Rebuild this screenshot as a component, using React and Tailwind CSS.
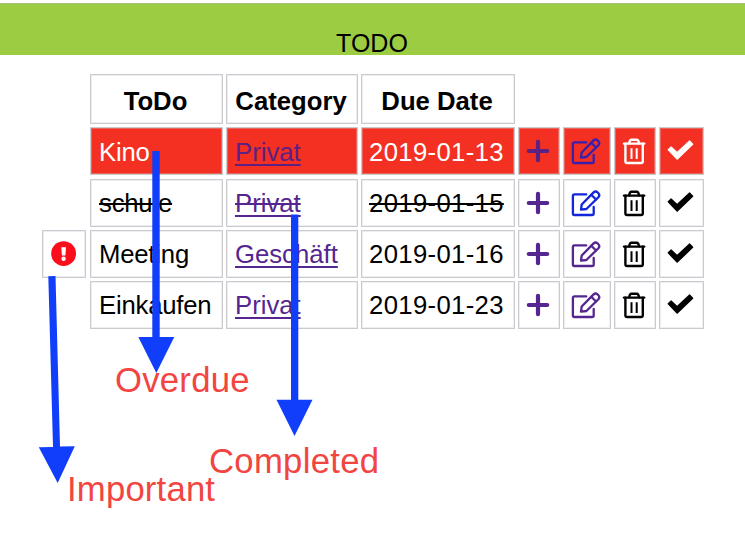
import React from "react";

function PlusIcon({ className }) {
  return (
    <svg viewBox="0 0 24 24" className={"h-6 w-6 " + className} fill="none" stroke="currentColor" strokeWidth="4.2" strokeLinecap="round">
      <path d="M12 2.8v18.4M2.8 12h18.4" />
    </svg>
  );
}

function EditIcon({ className }) {
  return (
    <svg viewBox="0 0 30 27" className={"h-[27px] w-[30px] shrink-0 " + className} fill="none" stroke="currentColor" strokeWidth="2.3" strokeLinejoin="round" strokeLinecap="round">
      <path d="M15.2 4.4H3.4Q1.9 4.4 1.9 5.9V23.5Q1.9 25 3.4 25H21Q22.7 25 22.7 23.5V17" />
      <path d="M10 19.7L10.7 14.5L22.6 2.4Q24.6 0.6 26.7 2.5L27.4 3.2Q29.2 5.2 27.4 7.2L15.4 19Z" />
      <path d="M20.3 4.8L25 9.5" />
    </svg>
  );
}

function TrashIcon() {
  return (
    <svg viewBox="0 0 24 27" className="h-[27px] w-6 shrink-0" fill="none" stroke="currentColor" strokeWidth="2.4" strokeLinejoin="round" strokeLinecap="round">
      <path d="M2 5.6H22.2" />
      <path d="M7.2 5.4Q7.6 1.8 9.4 1.8H14.8Q16.6 1.8 17 5.4" />
      <path d="M3.4 5.6V23.2Q3.4 25 5.1 25H19.1Q20.8 25 20.8 23.2V5.6" />
      <path d="M9.5 10.2V21M14.7 10.2V21" strokeWidth="2" strokeLinecap="butt" />
    </svg>
  );
}

function CheckIcon() {
  return (
    <svg viewBox="0 0 27 20" className="h-5 w-[27px] shrink-0 -translate-y-px" fill="currentColor" stroke="currentColor" strokeWidth="1.6" strokeLinejoin="round">
      <path d="M1.4 9.8L4 7.2L10.1 12.9L22.7 1.2L25.5 4.2L10.2 19Z" />
    </svg>
  );
}

function AlertIcon() {
  return (
    <svg viewBox="0 0 26 26" className="h-[26px] w-[26px] shrink-0">
      <circle cx="12.6" cy="12.6" r="12.4" fill="#fc0d1b" />
      <path d="M10.3 6.2H15L14.4 14.6H10.9Z" fill="#fff" />
      <circle cx="12.6" cy="17.8" r="2.2" fill="#fff" />
    </svg>
  );
}

const rows = [
  { title: "Kino", category: "Privat", due: "2019-01-13", overdue: true, edit: "text-[#3a1fae]" },
  { title: "schule", category: "Privat", due: "2019-01-15", done: true, edit: "text-[#1226d9]" },
  { title: "Meeting", category: "Geschäft", due: "2019-01-16", important: true, edit: "text-[#55268f]" },
  { title: "Einkaufen", category: "Privat", due: "2019-01-23", edit: "text-[#55268f]" },
];

const edge = "border border-[#cacad0] shadow-[inset_0_0_0_1px_rgba(205,205,211,0.35)] whitespace-nowrap";
const cell = "flex h-12 items-center " + edge;
const head = "flex h-[50px] items-center justify-center pt-[3px] pr-[2px] font-bold " + edge;

function Row({ item }) {
  const bg = item.overdue ? " bg-[#f33022] text-white" : " text-black";
  const nudge = item.overdue ? " pt-[2px]" : "";
  const strike = item.done ? "line-through decoration-[1.7px]" : "";
  const purple = item.overdue ? "text-[#5b2183]" : "text-[#55268f]";
  return (
    <>
      {item.important ? (
        <div className={cell + " w-11 justify-center"}>
          <AlertIcon />
        </div>
      ) : (
        <div />
      )}
      <div className={cell + " pl-2 tracking-[-0.2px]" + bg + nudge}>
        <span className={strike}>{item.title}</span>
      </div>
      <div className={cell + " pl-2" + bg + nudge}>
        <a className={purple + (item.done ? " [text-decoration-line:underline_line-through]" : " underline") + " decoration-[1.6px] underline-offset-[3px] [text-decoration-skip-ink:none]"}>
          {item.category}
        </a>
      </div>
      <div className={cell + " pl-[7px] tracking-[0.34px]" + bg + nudge}>
        <span className={strike}>{item.due}</span>
      </div>
      <div className={cell + " justify-center pr-[2px]" + bg}>
        <PlusIcon className={purple} />
      </div>
      <div className={cell + " justify-center pr-[2px]" + bg}>
        <EditIcon className={item.edit} />
      </div>
      <div className={cell + " justify-center pr-[2px]" + bg}>
        <TrashIcon />
      </div>
      <div className={cell + " justify-center pr-[2px]" + bg}>
        <CheckIcon />
      </div>
    </>
  );
}

export default function App() {
  return (
    <div className="relative h-[551px] w-[745px] overflow-hidden bg-white pt-[3px] font-['Liberation_Sans',Arial,sans-serif] text-[25.7px] leading-[30px] text-black">
      <header className="flex h-[52px] items-end justify-center border-t border-[#a9bd7d] bg-[#9ccc42]">
        <h1 className="translate-y-[3px] pr-px text-[25px]">TODO</h1>
      </header>
      <main className="mt-[19px] ml-[42px] grid w-[662px] grid-cols-[45px_133px_132px_154px_42px_48px_42px_45px] grid-rows-[50px_49px_48px_48px_48px] gap-[3px]">
        <div />
        <div className={head}>ToDo</div>
        <div className={head}>Category</div>
        <div className={head}>Due Date</div>
        <div className="col-span-4" />
        {rows.map((item) => (
          <Row key={item.due} item={item} />
        ))}
      </main>
      <svg className="absolute inset-0 font-['Liberation_Sans',Arial,sans-serif]" width="745" height="551" viewBox="0 0 745 551">
        <g fill="#f24541" fontSize="34.7">
          <text x="115" y="392.3" textLength="134.5">Overdue</text>
          <text x="209" y="472.6" textLength="170">Completed</text>
          <text x="67" y="500.8" textLength="148">Important</text>
        </g>
        <g fill="#103efb">
          <path d="M152.3 151H159.7V337H174.3L156.3 373L138.3 337H152.3Z" />
          <path d="M291 214.5H298.3V399.7H312.5L294.5 436L276.5 399.7H291Z" />
          <path d="M48.3 276.2L55.5 276L60 446.6L74.8 446.2L57.7 483L38.8 447.3L53 447Z" />
        </g>
      </svg>
    </div>
  );
}
